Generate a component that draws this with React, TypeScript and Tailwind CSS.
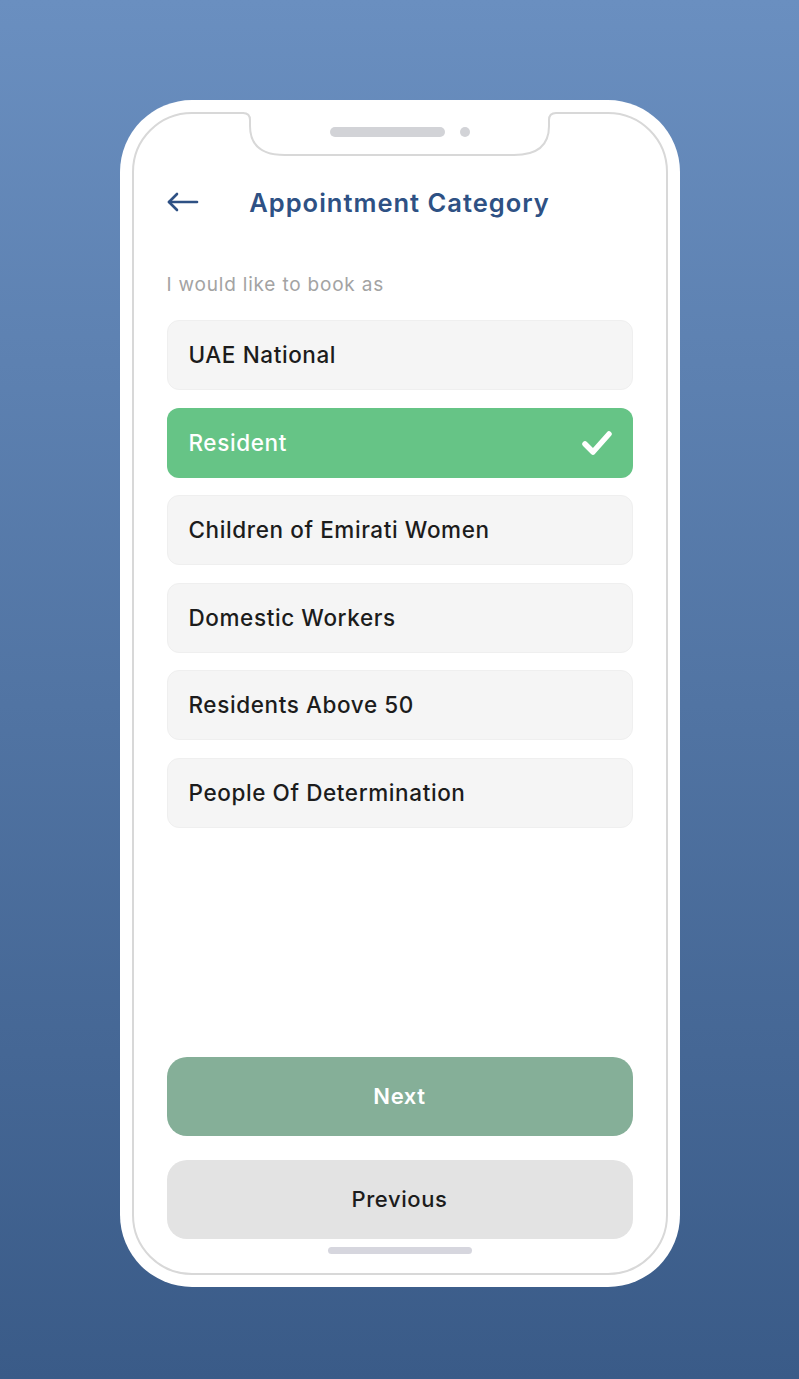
import React from "react";

const options = [
  "UAE National",
  "Resident",
  "Children of Emirati Women",
  "Domestic Workers",
  "Residents Above 50",
  "People Of Determination",
];

export default function App() {
  const selected = "Resident";
  return (
    <div
      className="w-[799px] h-[1379px] bg-linear-to-b from-[#6a8fc0] to-[#3a5b88] flex justify-center pt-[100px]"
      style={{ fontFamily: "Inter, 'Open Sans', sans-serif" }}
    >
      <div className="w-[560px] h-[1187px] bg-white rounded-[72px] p-[12px]">
        <div className="relative h-full border-2 border-[#d8d8d8] rounded-[60px] flex flex-col px-[33px] pt-[69px] pb-[19px]">
          <svg
            className="absolute top-[-2px] left-[106px]"
            width="320"
            height="50"
            viewBox="0 0 320 50"
          >
            <rect x="4" y="-1" width="312" height="4" fill="white" />
            <path
              d="M0 1 H3 Q10 1 10 8 V14 Q10 43 45 43 H274 Q309 43 309 14 V8 Q309 1 316 1 H320"
              fill="white"
              stroke="#d8d8d8"
              strokeWidth="2"
            />
            <rect x="90" y="15" width="115" height="10" rx="5" fill="#d2d3d7" />
            <circle cx="225" cy="20" r="5" fill="#d2d3d7" />
          </svg>

          <div className="relative h-[40px] flex items-center justify-center">
            <svg
              className="absolute left-0 top-[9px]"
              width="32"
              height="20"
              viewBox="0 0 32 20"
              fill="none"
              stroke="#2e5184"
              strokeWidth="2.6"
              strokeLinecap="round"
              strokeLinejoin="round"
            >
              <path d="M2 10 H30" />
              <path d="M10 2 L2 10 L10 18" />
            </svg>
            <h1 className="text-[25.5px] font-semibold text-[#2e5184] tracking-[1px]">
              Appointment Category
            </h1>
          </div>

          <p className="mt-[48px] text-[19px] leading-[28px] text-[#a3a3a3] tracking-[0.8px]">
            I would like to book as
          </p>

          <div className="mt-[21px] flex flex-col gap-[17.5px]">
            {options.map((o) =>
              o === selected ? (
                <div
                  key={o}
                  className="h-[70px] rounded-[12px] bg-[#66c486] flex items-center justify-between pl-[22px] pr-[20px]"
                >
                  <span className="text-[22.5px] font-medium text-white tracking-[0.6px]">{o}</span>
                  <svg
                    width="32"
                    height="28"
                    viewBox="0 0 32 28"
                    fill="none"
                    stroke="white"
                    strokeWidth="5.5"
                    strokeLinecap="round"
                    strokeLinejoin="round"
                  >
                    <path d="M4 15 L12 23 L28 5" />
                  </svg>
                </div>
              ) : (
                <div
                  key={o}
                  className="h-[70px] rounded-[12px] bg-[#f5f5f5] border border-[#efefef] flex items-center pl-[21px]"
                >
                  <span className="text-[22.5px] font-medium text-[#1c1c1c] tracking-[0.6px]">{o}</span>
                </div>
              )
            )}
          </div>

          <div className="flex-1" />

          <button className="h-[79px] rounded-[20px] bg-[#85af98] text-white text-[22px] font-semibold tracking-[0.6px]">
            Next
          </button>
          <button className="mt-[24px] h-[79px] rounded-[20px] bg-[#e3e3e3] text-[#1c1c1c] text-[22px] font-medium tracking-[0.6px]">
            Previous
          </button>
          <div className="mt-[8px] flex justify-center">
            <div className="w-[144px] h-[7px] rounded-full bg-[#d6d6de]" />
          </div>
        </div>
      </div>
    </div>
  );
}
